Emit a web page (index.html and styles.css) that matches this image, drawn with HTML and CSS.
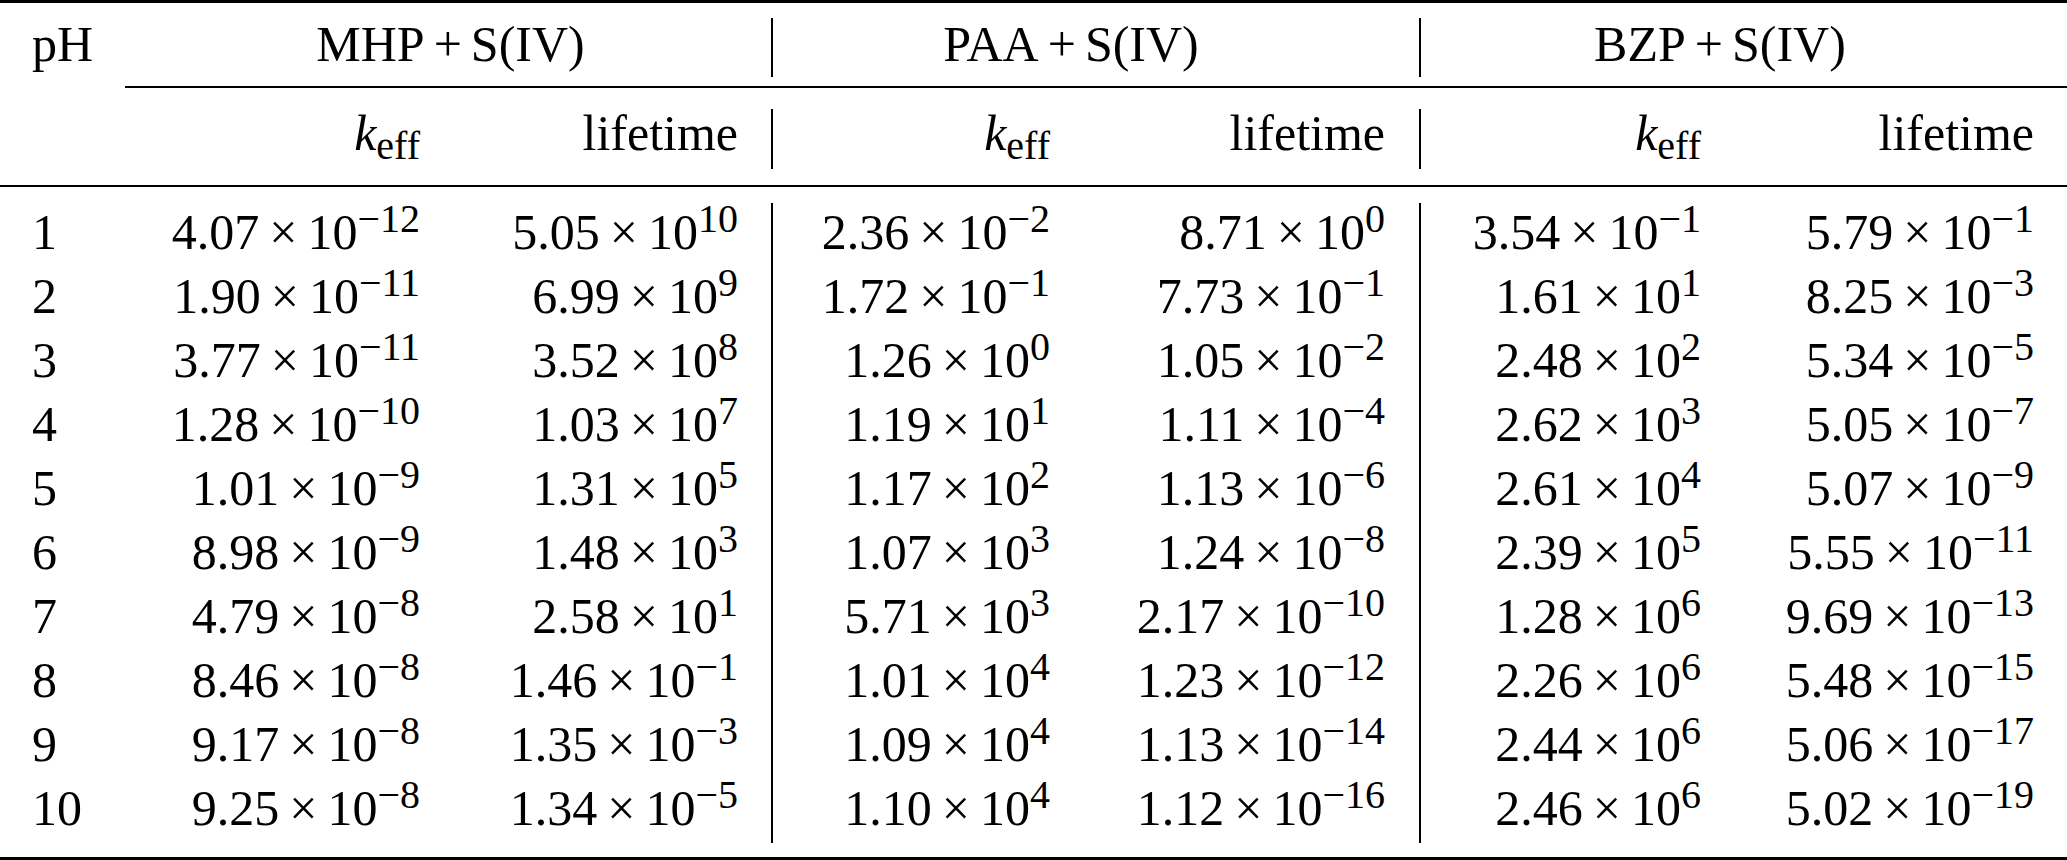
FILE: index.html
```html
<!DOCTYPE html>
<html>
<head>
<meta charset="utf-8">
<link rel="stylesheet" href="styles.css">
</head>
<body>
<div class="tbl">
  <div class="rule heavy"></div>
  <div class="row head1">
    <div class="c ph">pH</div>
    <div class="c grp vl">MHP<span class="op">+</span>S(IV)</div>
    <div class="c grp grp2 vl">PAA<span class="op">+</span>S(IV)</div>
    <div class="c grp grp3">BZP<span class="op">+</span>S(IV)</div>
  </div>
  <div class="cmid"></div>
  <div class="row head2">
    <div class="c ph"></div>
    <div class="c n"><i>k</i><sub>eff</sub></div>
    <div class="c n l1 vl">lifetime</div>
    <div class="c n"><i>k</i><sub>eff</sub></div>
    <div class="c n l2 vl">lifetime</div>
    <div class="c n"><i>k</i><sub>eff</sub></div>
    <div class="c n l3">lifetime</div>
  </div>
  <div class="rule mid"></div>
  <div class="body">
    <div class="row br"><div class="c ph">1</div><div class="c n">4.07<span class="x">×</span>10<sup>−12</sup></div><div class="c n l1 vl">5.05<span class="x">×</span>10<sup>10</sup></div><div class="c n">2.36<span class="x">×</span>10<sup>−2</sup></div><div class="c n l2 vl">8.71<span class="x">×</span>10<sup>0</sup></div><div class="c n">3.54<span class="x">×</span>10<sup>−1</sup></div><div class="c n l3">5.79<span class="x">×</span>10<sup>−1</sup></div></div>
    <div class="row br"><div class="c ph">2</div><div class="c n">1.90<span class="x">×</span>10<sup>−11</sup></div><div class="c n l1 vl">6.99<span class="x">×</span>10<sup>9</sup></div><div class="c n">1.72<span class="x">×</span>10<sup>−1</sup></div><div class="c n l2 vl">7.73<span class="x">×</span>10<sup>−1</sup></div><div class="c n">1.61<span class="x">×</span>10<sup>1</sup></div><div class="c n l3">8.25<span class="x">×</span>10<sup>−3</sup></div></div>
    <div class="row br"><div class="c ph">3</div><div class="c n">3.77<span class="x">×</span>10<sup>−11</sup></div><div class="c n l1 vl">3.52<span class="x">×</span>10<sup>8</sup></div><div class="c n">1.26<span class="x">×</span>10<sup>0</sup></div><div class="c n l2 vl">1.05<span class="x">×</span>10<sup>−2</sup></div><div class="c n">2.48<span class="x">×</span>10<sup>2</sup></div><div class="c n l3">5.34<span class="x">×</span>10<sup>−5</sup></div></div>
    <div class="row br"><div class="c ph">4</div><div class="c n">1.28<span class="x">×</span>10<sup>−10</sup></div><div class="c n l1 vl">1.03<span class="x">×</span>10<sup>7</sup></div><div class="c n">1.19<span class="x">×</span>10<sup>1</sup></div><div class="c n l2 vl">1.11<span class="x">×</span>10<sup>−4</sup></div><div class="c n">2.62<span class="x">×</span>10<sup>3</sup></div><div class="c n l3">5.05<span class="x">×</span>10<sup>−7</sup></div></div>
    <div class="row br"><div class="c ph">5</div><div class="c n">1.01<span class="x">×</span>10<sup>−9</sup></div><div class="c n l1 vl">1.31<span class="x">×</span>10<sup>5</sup></div><div class="c n">1.17<span class="x">×</span>10<sup>2</sup></div><div class="c n l2 vl">1.13<span class="x">×</span>10<sup>−6</sup></div><div class="c n">2.61<span class="x">×</span>10<sup>4</sup></div><div class="c n l3">5.07<span class="x">×</span>10<sup>−9</sup></div></div>
    <div class="row br"><div class="c ph">6</div><div class="c n">8.98<span class="x">×</span>10<sup>−9</sup></div><div class="c n l1 vl">1.48<span class="x">×</span>10<sup>3</sup></div><div class="c n">1.07<span class="x">×</span>10<sup>3</sup></div><div class="c n l2 vl">1.24<span class="x">×</span>10<sup>−8</sup></div><div class="c n">2.39<span class="x">×</span>10<sup>5</sup></div><div class="c n l3">5.55<span class="x">×</span>10<sup>−11</sup></div></div>
    <div class="row br"><div class="c ph">7</div><div class="c n">4.79<span class="x">×</span>10<sup>−8</sup></div><div class="c n l1 vl">2.58<span class="x">×</span>10<sup>1</sup></div><div class="c n">5.71<span class="x">×</span>10<sup>3</sup></div><div class="c n l2 vl">2.17<span class="x">×</span>10<sup>−10</sup></div><div class="c n">1.28<span class="x">×</span>10<sup>6</sup></div><div class="c n l3">9.69<span class="x">×</span>10<sup>−13</sup></div></div>
    <div class="row br"><div class="c ph">8</div><div class="c n">8.46<span class="x">×</span>10<sup>−8</sup></div><div class="c n l1 vl">1.46<span class="x">×</span>10<sup>−1</sup></div><div class="c n">1.01<span class="x">×</span>10<sup>4</sup></div><div class="c n l2 vl">1.23<span class="x">×</span>10<sup>−12</sup></div><div class="c n">2.26<span class="x">×</span>10<sup>6</sup></div><div class="c n l3">5.48<span class="x">×</span>10<sup>−15</sup></div></div>
    <div class="row br"><div class="c ph">9</div><div class="c n">9.17<span class="x">×</span>10<sup>−8</sup></div><div class="c n l1 vl">1.35<span class="x">×</span>10<sup>−3</sup></div><div class="c n">1.09<span class="x">×</span>10<sup>4</sup></div><div class="c n l2 vl">1.13<span class="x">×</span>10<sup>−14</sup></div><div class="c n">2.44<span class="x">×</span>10<sup>6</sup></div><div class="c n l3">5.06<span class="x">×</span>10<sup>−17</sup></div></div>
    <div class="row br"><div class="c ph">10</div><div class="c n">9.25<span class="x">×</span>10<sup>−8</sup></div><div class="c n l1 vl">1.34<span class="x">×</span>10<sup>−5</sup></div><div class="c n">1.10<span class="x">×</span>10<sup>4</sup></div><div class="c n l2 vl">1.12<span class="x">×</span>10<sup>−16</sup></div><div class="c n">2.46<span class="x">×</span>10<sup>6</sup></div><div class="c n l3">5.02<span class="x">×</span>10<sup>−19</sup></div></div>
  </div>
  <div class="rule heavy bottom"></div>
</div>
</body>
</html>
```

FILE: styles.css
```css
html, body {
  margin: 0;
  padding: 0;
  background: #fff;
}

.tbl {
  width: 2067px;
  height: 860px;
  font-family: "Liberation Serif", "Times New Roman", serif;
  font-size: 50px;
  color: #000;
  overflow: hidden;
}

.rule {
  background: #000;
  height: 2px;
}

.rule.heavy {
  height: 3px;
}

.rule.mid {
  margin-top: 16px;
}

.rule.bottom {
  margin-top: 14px;
}

.cmid {
  margin-top: 9px;
  margin-left: 125px;
  height: 2px;
  background: #000;
}

.row {
  display: grid;
  grid-template-columns: 110px 328px 335px 295px 353px 298px 348px;
}

.c {
  white-space: nowrap;
}

.vl {
  border-right: 2px solid #000;
}

.ph {
  padding-left: 32px;
  text-align: left;
}

.n {
  text-align: right;
  padding-right: 18px;
}

.n.l1 {
  padding-right: 33px;
}

.n.l2 {
  padding-right: 34px;
}

.n.l3 {
  padding-right: 33px;
}

/* header row 1 */
.head1 {
  margin-top: 15px;
}

.head1 .c {
  line-height: 52px;
  padding-bottom: 7px;
}

.grp {
  grid-column: span 2;
  text-align: center;
  padding-left: 20px;
}

.grp2 {
  padding-left: 0;
  padding-right: 50px;
}

.grp3 {
  padding-left: 0;
  padding-right: 48px;
}

.op {
  margin: 0 0.18em;
}

/* header row 2 */
.head2 {
  margin-top: 21px;
}

.head2 .c {
  line-height: 48px;
  padding-bottom: 12px;
}

sub {
  font-size: 0.8em;
  line-height: 0;
  vertical-align: -9px;
}

/* body */
.body {
  margin-top: 16px;
}

.br .c {
  line-height: 58px;
  padding-bottom: 6px;
}

.x {
  margin: 0 0.2em;
}

sup {
  font-size: 0.8em;
  line-height: 0;
  vertical-align: 17px;
}
```
